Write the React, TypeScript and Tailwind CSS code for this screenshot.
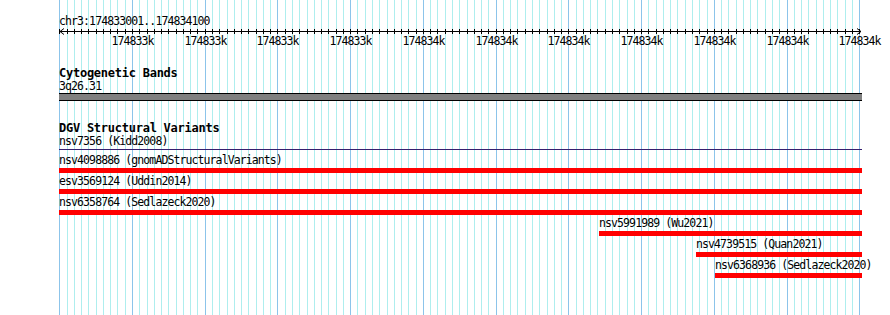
import React from "react";

const X0 = 59;
const X1 = 862;
const STEP = 800 / 110;
const lineX = (i: number) => Math.round(59.3 + i * STEP);
const idx = Array.from({ length: 111 }, (_, i) => i);

const rulerLabels = [
  "174833k", "174833k", "174833k", "174833k",
  "174834k", "174834k", "174834k", "174834k", "174834k", "174834k", "174834k",
];

const feats = [
  { label: "nsv4098886 (gnomADStructuralVariants)", start: 59, end: 862 },
  { label: "esv3569124 (Uddin2014)", start: 59, end: 862 },
  { label: "nsv6358764 (Sedlazeck2020)", start: 59, end: 862 },
  { label: "nsv5991989 (Wu2021)", start: 599, end: 862 },
  { label: "nsv4739515 (Quan2021)", start: 696, end: 862 },
  { label: "nsv6368936 (Sedlazeck2020)", start: 715, end: 862 },
];

const txt = "text-[11.5px] leading-[12px] tracking-[-0.9px] h-[12px] whitespace-nowrap";
const title = "text-[12px] leading-[12px] font-bold tracking-[-0.25px] h-[12px] whitespace-nowrap";

function Grid() {
  return (
    <div className="absolute inset-0 z-0">
      {idx.map((i) => (
        <div
          key={i}
          className={
            "absolute top-0 bottom-0 w-px " +
            (i % 10 === 0 ? "bg-[#8cc4ea]" : "bg-[#aeeeee]")
          }
          style={{ left: lineX(i) }}
        />
      ))}
    </div>
  );
}

function Ruler() {
  const w = X1 - X0;
  return (
    <svg width={w} height={8} className="block" shapeRendering="crispEdges">
      <line x1={1} y1={4.5} x2={w - 1} y2={4.5} stroke="#000" strokeWidth={1} />
      {idx.map((i) => {
        const x = lineX(i) - X0 + 0.5;
        return <line key={i} x1={x} y1={2} x2={x} y2={7} stroke="#000" strokeWidth={1} />;
      })}
      <polyline points="5,1.5 1,4.5 5,7.5" fill="none" stroke="#000" strokeWidth={1} shapeRendering="auto" />
      <polyline points={`${w - 5},1.5 ${w - 1},4.5 ${w - 5},7.5`} fill="none" stroke="#000" strokeWidth={1} shapeRendering="auto" />
    </svg>
  );
}

export default function App() {
  return (
    <div
      className="relative w-[890px] h-[315px] overflow-hidden bg-white text-black"
      style={{ fontFamily: '"DejaVu Sans Mono", "Liberation Mono", monospace' }}
    >
      <Grid />
      <div className="relative z-10 flex flex-col pt-[15px]">
        <div className="pl-[59px] flex flex-col w-[862px]">
          <div className={txt}>chr3:174833001..174834100</div>
          <Ruler />
          <div className="relative h-[12px]">
            {rulerLabels.map((l, k) => (
              <span
                key={k}
                className={"absolute top-0 -translate-x-1/2 " + txt}
                style={{ left: lineX((k + 1) * 10) - X0 + 0.5 }}
              >
                {l}
              </span>
            ))}
          </div>

          <div className={"mt-[20px] " + title}>Cytogenetic Bands</div>
          <div className={"mt-[1px] " + txt}>3q26.31</div>
          <div className="mt-[1px] h-[8px] w-[803px] border-y border-black bg-[#808080]" />

          <div className={"mt-[21px] " + title}>DGV Structural Variants</div>
          <div className={"mt-[1px] " + txt}>nsv7356 (Kidd2008)</div>
          <div className="mt-[2px] h-px w-[803px] bg-[#35206f]" />

          <div className="mt-[4px] flex flex-col">
            {feats.map((f, k) => (
              <div key={k} className="h-[21px] flex flex-col" style={{ marginLeft: f.start - X0 }}>
                <div className={txt}>{f.label}</div>
                <div className="mt-[2px] h-[5px] bg-[#ff0000]" style={{ width: f.end - f.start }} />
              </div>
            ))}
          </div>
        </div>
      </div>
    </div>
  );
}
